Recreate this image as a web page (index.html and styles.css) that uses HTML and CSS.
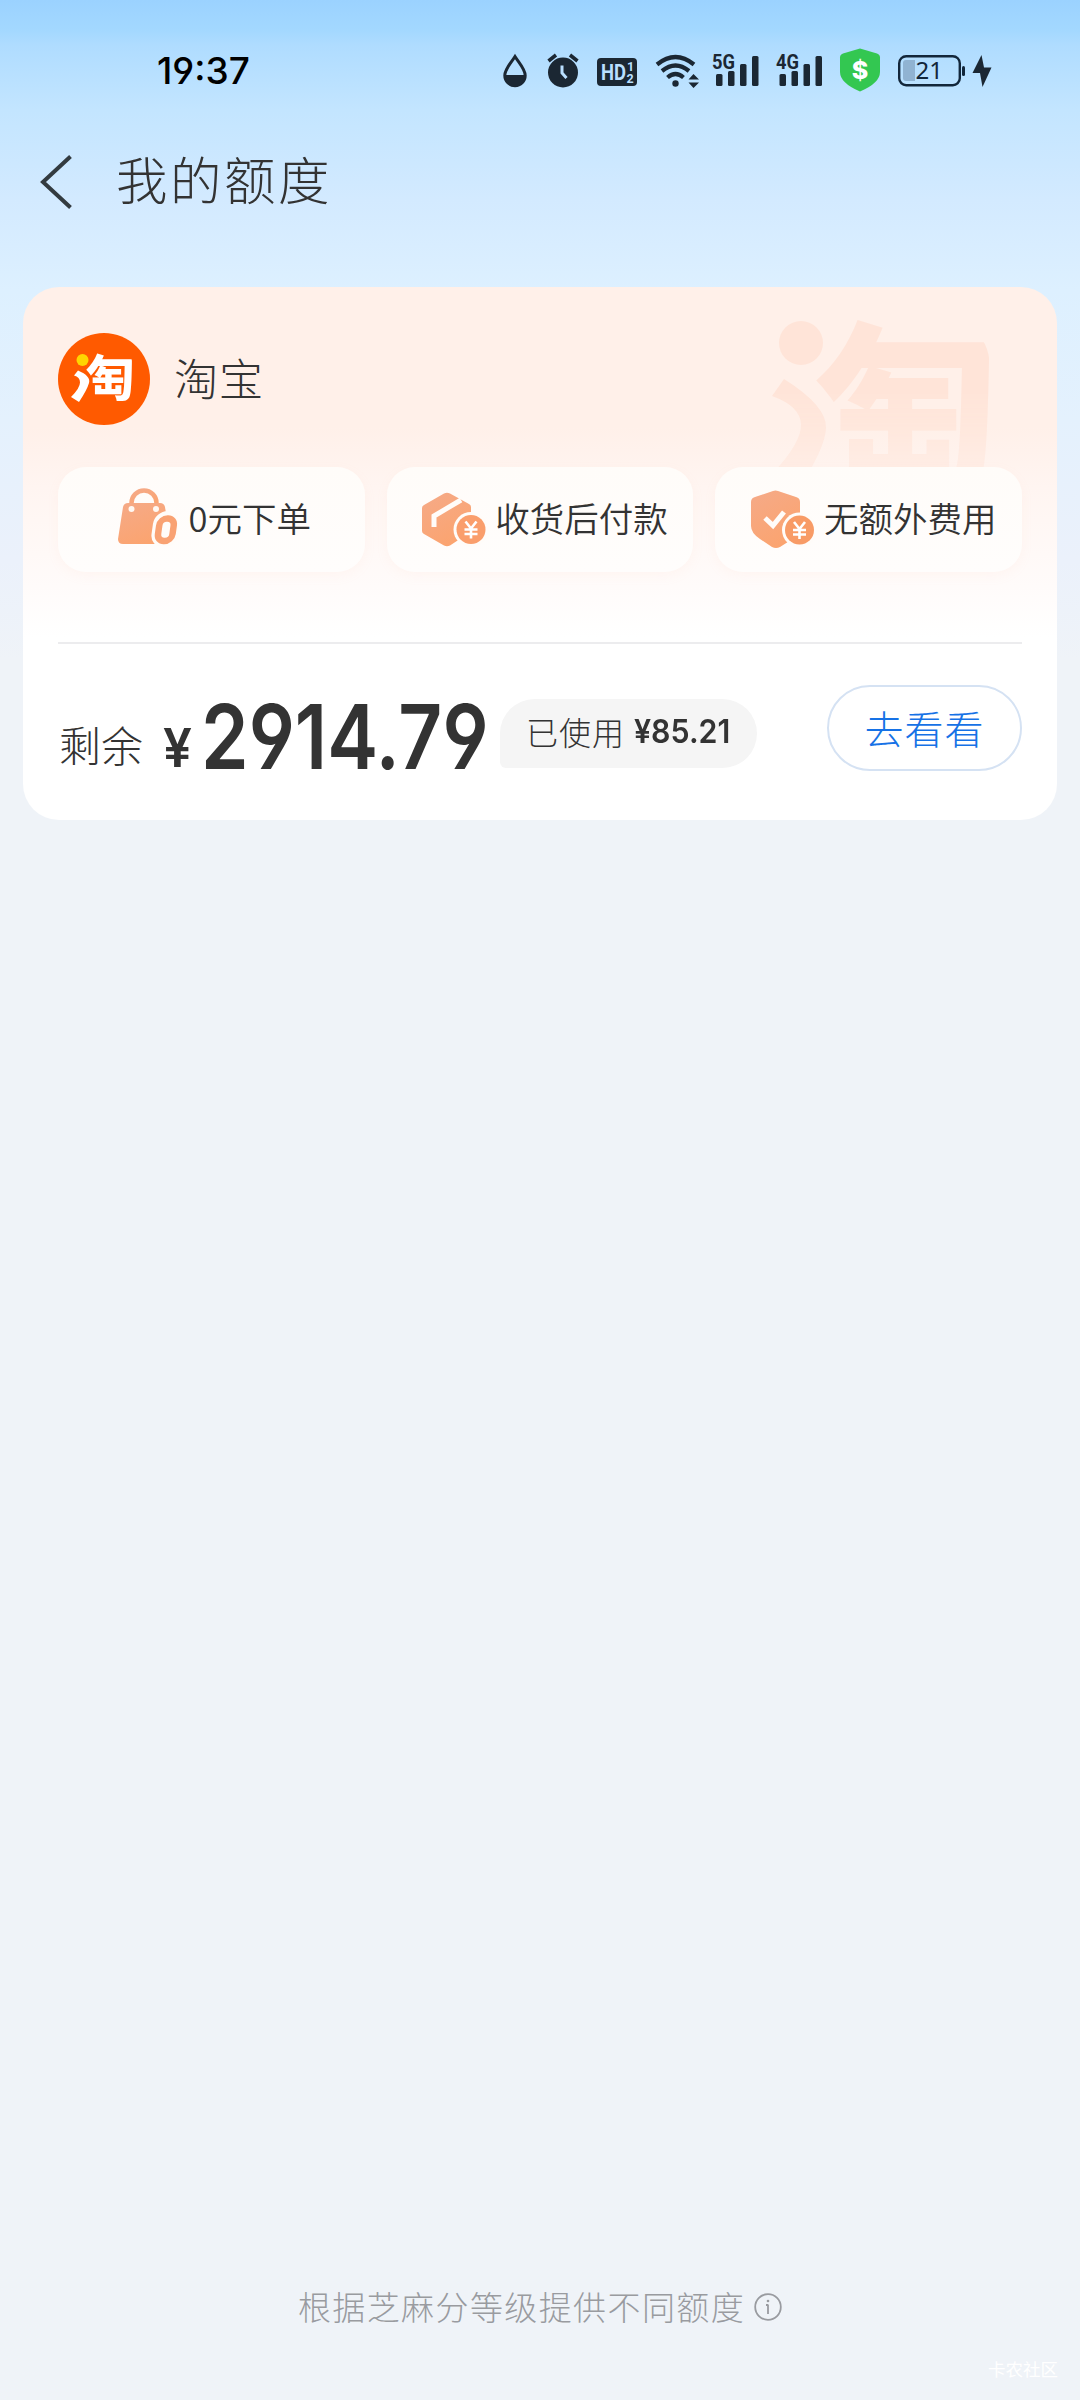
FILE: index.html
```html
<!DOCTYPE html>
<html lang="zh-CN">
<head>
<meta charset="utf-8">
<title>我的额度</title>
<link rel="stylesheet" href="styles.css">
</head>
<body>
<svg class="defs" width="0" height="0" aria-hidden="true">
  <defs>
    <linearGradient id="peach" x1="0" y1="0" x2="0.5" y2="1">
      <stop offset="0" stop-color="#f5aa88"/>
      <stop offset="1" stop-color="#fba470"/>
    </linearGradient>
    <clipPath id="round-lg"><path d="M0 0H168Q218 2 218 50V180H0Z"/></clipPath>
    <clipPath id="round-sm"><path d="M0 0H62Q75 22 75 36V92H0Z"/></clipPath>
  </defs>
</svg>
<div class="screen">
  <header class="status">
    <span class="clock">19:37</span>
    <div class="status-icons">
      <svg class="i-drop" width="24" height="34" viewBox="0 0 24 34"><path d="M12 2.500C8 9 1.800 15 1.800 21.500a10.200 10.200 0 0 0 20.400 0C22.200 15 16 9 12 2.500Z" fill="none" stroke="#1b2733" stroke-width="3"/><path d="M1.500 21h21a10.500 11.500 0 0 1-21 0Z" fill="#1b2733"/></svg>
      <svg class="i-alarm" width="32" height="35" viewBox="0 0 32 35"><circle cx="16" cy="19.500" r="15" fill="#1b2733"/><path d="M1.500 8 9 2M30.500 8 23 2" stroke="#1b2733" stroke-width="3.600"/><path d="M15 12.500v7.500l4.500 5" fill="none" stroke="#b9dfff" stroke-width="3"/></svg>
      <svg class="i-hd" width="40" height="28" viewBox="0 0 40 28"><rect width="40" height="28" rx="4" fill="#1b2733"/><text x="4" y="21.500" class="hd" textLength="25" lengthAdjust="spacingAndGlyphs">HD</text><text x="30" y="12.500" class="hd-n">1</text><text x="29.500" y="25" class="hd-n">2</text></svg>
      <svg class="i-wifi" width="46" height="36" viewBox="0 0 46 36"><g fill="none" stroke="#1b2733" stroke-width="4.200"><path d="M2 11.500q18.500-15 37 0"/><path d="M7 18q13.500-11 27 0"/><path d="M12.500 24.500q8-7 16 0"/></g><circle cx="20.500" cy="30.500" r="3.200" fill="#1b2733"/><path d="M33.500 26.500 38.500 21l5.500 5.500ZM33.500 29.500 38.500 35l5.500-5.500Z" fill="#1b2733"/></svg>
      <svg class="i-sig1" width="48" height="34" viewBox="0 0 48 34"><text x="0" y="15.500" class="net" textLength="23" lengthAdjust="spacingAndGlyphs">5G</text><g fill="#1b2733"><rect x="4" y="21" width="6.500" height="12" rx="1.500"/><rect x="16" y="18" width="6.500" height="15" rx="1.500"/><rect x="28" y="11" width="6.500" height="22" rx="1.500"/><rect x="40" y="3" width="6.500" height="30" rx="1.500"/></g></svg>
      <svg class="i-sig2" width="48" height="34" viewBox="0 0 48 34"><text x="0" y="15.500" class="net" textLength="23" lengthAdjust="spacingAndGlyphs">4G</text><g fill="#1b2733"><rect x="3.500" y="21" width="6.500" height="12" rx="1.500"/><rect x="15.500" y="18" width="6.500" height="15" rx="1.500"/><rect x="27.500" y="11" width="6.500" height="22" rx="1.500"/><rect x="39.500" y="3" width="6.500" height="30" rx="1.500"/></g></svg>
      <svg class="i-shield" width="40" height="44" viewBox="0 0 40 44"><path d="M20 .5 37 5.500q3 1 3 4V24q0 11-20 19.500Q0 35 0 24V9.500q0-3 3-4Z" fill="#33c751"/><text x="20" y="30.500" class="dollar" text-anchor="middle">$</text></svg>
      <svg class="i-batt" width="68" height="32" viewBox="0 0 68 32"><rect x="1.200" y="1.200" width="60.600" height="29" rx="7" fill="none" stroke="#12263a" stroke-width="2.400"/><path d="M8 5h9v21H8q-3 0-3-3V8q0-3 3-3Z" fill="#90b3d2"/><rect x="64" y="11" width="3" height="10" rx="1.500" fill="#12263a"/><text x="17.500" y="24" class="batt-n">21</text></svg>
      <svg class="i-bolt" width="20" height="32" viewBox="0 0 20 32"><path d="M9.500 0 .5 18h7.500l2.500 14L19.500 12.500H12Z" fill="#1b2733"/></svg>
    </div>
  </header>

  <nav class="nav">
    <svg class="back" width="32" height="54" viewBox="0 0 32 54"><path d="M30.500 1.500 3 27l27.500 25.500" fill="none" stroke="#333b40" stroke-width="4"/></svg>
    <h1 class="title">我的额度</h1>
  </nav>

  <main class="card">
    <svg class="card-mark" width="222" height="180" viewBox="0 0 222 180" aria-hidden="true"><g fill="#ffe4d8"><circle cx="29" cy="23" r="22"/><path d="M12 59Q55 86 54 108T24 172L1 153Q30 122 29 104T0 76Z"/><g clip-path="url(#round-lg)"><text x="43" y="161" class="tao tao-lg">匋</text></g></g></svg>
    <section class="brand">
      <svg class="logo" width="92" height="92" viewBox="0 0 92 92"><circle cx="46" cy="46" r="46" fill="#ff5a00"/><circle cx="24.500" cy="27" r="6" fill="#ffd500"/><g fill="#fff"><path d="M20 37.500Q33 43 31 50T21 69L13 64Q22 55 22 49.500T16 42.500Z"/><g clip-path="url(#round-sm)"><text x="28" y="63" class="tao tao-sm">匋</text></g></g></svg>
      <span class="brand-name">淘宝</span>
    </section>
    <ul class="perks">
      <li class="perk">
        <svg width="60" height="58" viewBox="0 0 60 58"><path d="M13.500 20V15a12.500 12.500 0 0 1 25 0v5" fill="none" stroke="url(#peach)" stroke-width="4.500"/><path d="M10 15h32q4 0 5 4l5 32q0 5-5 5H5q-5 0-5-5L5 19q1-4 5-4Z" fill="url(#peach)"/><circle cx="13.500" cy="21" r="3" fill="#fff8f2"/><circle cx="38" cy="21" r="3" fill="#fff8f2"/><g transform="skewX(-8) translate(6 0)"><rect x="34" y="23" width="28" height="36" rx="13" fill="#fffcf9"/><rect x="40.500" y="30.500" width="14.500" height="22.500" rx="7" fill="none" stroke="#f9a273" stroke-width="6.500"/></g></svg>
        <span class="perk-text">0元下单</span>
      </li>
      <li class="perk perk-wide">
        <svg width="64" height="56" viewBox="0 0 64 56"><path d="M22 2.500q3-1.500 6 0L47 13q2 1 2 3v23q0 2-2 3L28 54.500q-3 1.500-6 0L2 43Q0 42 0 40V17q0-2 2-3Z" fill="url(#peach)"/><path d="M12 36V25L39 9" fill="none" stroke="#fffcf9" stroke-width="5"/><circle cx="49" cy="38.500" r="17.500" fill="#fffcf9"/><circle cx="49" cy="38.500" r="14.500" fill="#fa9e6c"/><path d="M43.500 30.500l5.500 7 5.500-7M49 37.500v10M42.500 38.500h13M42.500 43h13" fill="none" stroke="#fff" stroke-width="2.600"/></svg>
        <span class="perk-text">收货后付款</span>
      </li>
      <li class="perk perk-wide">
        <svg width="64" height="58" viewBox="0 0 64 58"><path d="M22 1q2.500-1 5 0l18 6q4 1 4 5v24q0 8-9 14l-11 7q-4 2-8 0L9 49Q0 43 0 36V12q0-4 4-5Z" fill="url(#peach)"/><path d="m14 28 8 7.500L33 22" fill="none" stroke="#fffcf9" stroke-width="5"/><circle cx="48.500" cy="40" r="17.500" fill="#fffcf9"/><circle cx="48.500" cy="40" r="14.500" fill="#f89b66"/><path d="M43 32l5.500 7 5.500-7M48.500 39v10M42 40h13M42 44.500h13" fill="none" stroke="#fff" stroke-width="2.600"/></svg>
        <span class="perk-text">无额外费用</span>
      </li>
    </ul>
    <section class="balance">
      <span class="label">剩余</span>
      <span class="yen">¥</span>
      <span class="amount"><span class="amount-n">2914.79</span></span>
      <span class="used"><span class="used-label">已使用</span><b class="used-n">¥85.21</b></span>
      <button class="go">去看看</button>
    </section>
  </main>

  <footer class="foot">
    <span>根据芝麻分等级提供不同额度</span>
    <svg width="28" height="28" viewBox="0 0 28 28"><circle cx="14" cy="14" r="12.800" fill="none" stroke="#999ba0" stroke-width="1.800"/><path d="M14 11.500V21M12 12h2" stroke="#999ba0" stroke-width="1.800"/><circle cx="14" cy="8" r="1.300" fill="#999ba0"/></svg>
  </footer>
  <div class="source">卡农社区</div>
</div>
</body>
</html>
```
FILE: styles.css
```css
* { box-sizing: border-box; margin: 0; padding: 0; }
body {
  font-family: "Noto Sans CJK SC", sans-serif;
  font-weight: 300;
  color: #333;
  background: #eff3f8;
}
.defs { position: absolute; }
.screen {
  width: 1080px;
  height: 2400px;
  display: flex;
  flex-direction: column;
  background: linear-gradient(180deg, #9bd2ff 0, #a3d8ff 30px, #afdcff 45px, #c3e5ff 110px, #d3eaff 200px, #ddf0ff 290px, #e4f1fd 420px, #ebf1fb 560px, #eff3f8 660px);
}

.status { height: 140px; display: flex; align-items: flex-start; padding-left: 157px; }
.clock {
  width: 343px;
  font: 500 37px/44px Inter, sans-serif;
  font-feature-settings: "cv04";
  color: #000;
  margin-top: 49px;
}
.status-icons { display: flex; align-items: flex-start; padding-top: 48px; }
.status-icons svg { display: block; flex: none; overflow: visible; }
.i-drop { margin: 6px 0 0 3px; }
.i-alarm { margin: 5px 0 0 20px; }
.i-hd { margin: 10px 0 0 18px; }
.i-wifi { margin: 5px 0 0 18px; }
.i-sig1 { margin: 5px 0 0 11px; }
.i-sig2 { margin: 5px 0 0 16px; }
.i-shield { margin: 0 0 0 16px; }
.i-batt { margin: 7px 0 0 18px; }
.i-bolt { margin: 7px 0 0 6px; }
.hd { font: 700 22px Roboto, sans-serif; fill: #b9dfff; }
.hd-n { font: 700 12.500px Roboto, sans-serif; fill: #b9dfff; }
.net { font: 700 21px Roboto, sans-serif; fill: #1b2733; }
.dollar { font: 800 25px Inter, sans-serif; fill: #fff; }
.batt-n { font: 400 24px "Noto Sans", sans-serif; fill: #12263a; }

.nav { height: 147px; display: flex; align-items: flex-start; padding-left: 40px; }
.back { margin-top: 15px; }
.title { font-size: 51.500px; font-weight: 300; line-height: 76px; letter-spacing: 2.500px; margin: 0 0 0 44px; }

.card {
  position: relative;
  width: 1034px;
  height: 533px;
  margin-left: 23px;
  padding: 46px 35px 0;
  border-radius: 36px;
  background: linear-gradient(180deg, #fff0e9 0, #fff0e9 140px, #fff5f1 200px, #fffbfa 300px, #fff 350px);
}
.card-mark {
  position: absolute;
  left: 749px;
  top: 33px;
  overflow: visible;
  -webkit-mask-image: linear-gradient(#000 40%, rgba(0, 0, 0, .15));
  mask-image: linear-gradient(#000 40%, rgba(0, 0, 0, .15));
}
.tao { font-family: "Noto Sans CJK SC", sans-serif; font-weight: 900; }
.tao-lg { font-size: 186px; }
.tao-sm { font-size: 49px; }

.brand { display: flex; align-items: center; height: 92px; gap: 24px; }
.brand-name { font-size: 44px; line-height: 64px; letter-spacing: 1px; padding-bottom: 4px; }

.perks { position: relative; display: grid; grid-template-columns: repeat(3, minmax(0, 1fr)); gap: 22px; margin-top: 42px; list-style: none; }
.perk {
  height: 105px;
  display: flex;
  align-items: center;
  justify-content: center;
  gap: 11px;
  padding: 0 0 5px 6px;
  border-radius: 28px;
  background: linear-gradient(180deg, #fffcf9, #fffdfc);
  box-shadow: 0 4px 12px rgba(255, 190, 170, .08);
  font-size: 34.500px;
  font-weight: 350;
  line-height: 50px;
  white-space: nowrap;
}
.perk-wide { gap: 9px; padding-left: 10px; padding-bottom: 2px; }
.perk-text { padding-bottom: 0; }
.perk-wide .perk-text { padding-bottom: 3px; }

.balance {
  display: flex;
  align-items: flex-start;
  height: 178px;
  margin-top: 70px;
  border-top: 2px solid #ececee;
  white-space: nowrap;
}
.label { font-size: 42px; line-height: 60px; margin: 70px 0 0 1px; width: 104px; }
.yen { font: 600 54px/60px Inter, sans-serif; width: 38px; margin-top: 74px; transform: scaleX(.95); transform-origin: 0 0; }
.amount { width: 299px; margin-top: 38px; }
.amount-n {
  display: inline-block;
  font: 640 90px/110px Inter, sans-serif;
  font-feature-settings: "cv04";
  transform: scaleX(.85);
  transform-origin: 0 0;
}
.used {
  display: flex;
  align-items: center;
  width: 257px;
  height: 69px;
  margin-top: 55px;
  padding-left: 26px;
  border-radius: 35px 35px 35px 6px;
  background: #f5f5f5;
  font-size: 32px;
  letter-spacing: 1px;
}
.used-label { padding-bottom: 5px; }
.used-n {
  font: 620 33px/40px Inter, sans-serif;
  letter-spacing: 0;
  transform: scaleX(.92);
  transform-origin: 0 50%;
  margin: 0 0 5px 9px;
}
.go {
  width: 195px;
  height: 86px;
  margin: 41px 0 0 auto;
  padding-bottom: 2px;
  border: 2px solid #d5e2f3;
  border-radius: 44px;
  background: #fff;
  color: #1672e6;
  font: 300 39px/56px "Noto Sans CJK SC", sans-serif;
  letter-spacing: 1px;
}

.foot {
  display: flex;
  align-items: center;
  justify-content: center;
  gap: 9px;
  height: 50px;
  margin-top: 1462px;
  color: #999ba0;
  font-size: 33px;
  letter-spacing: 1.400px;
}
.foot span { padding-bottom: 3px; }
.source { margin: 24px 22px 0 auto; color: #fff; font-size: 17.500px; line-height: 26px; font-weight: 400; }
```
